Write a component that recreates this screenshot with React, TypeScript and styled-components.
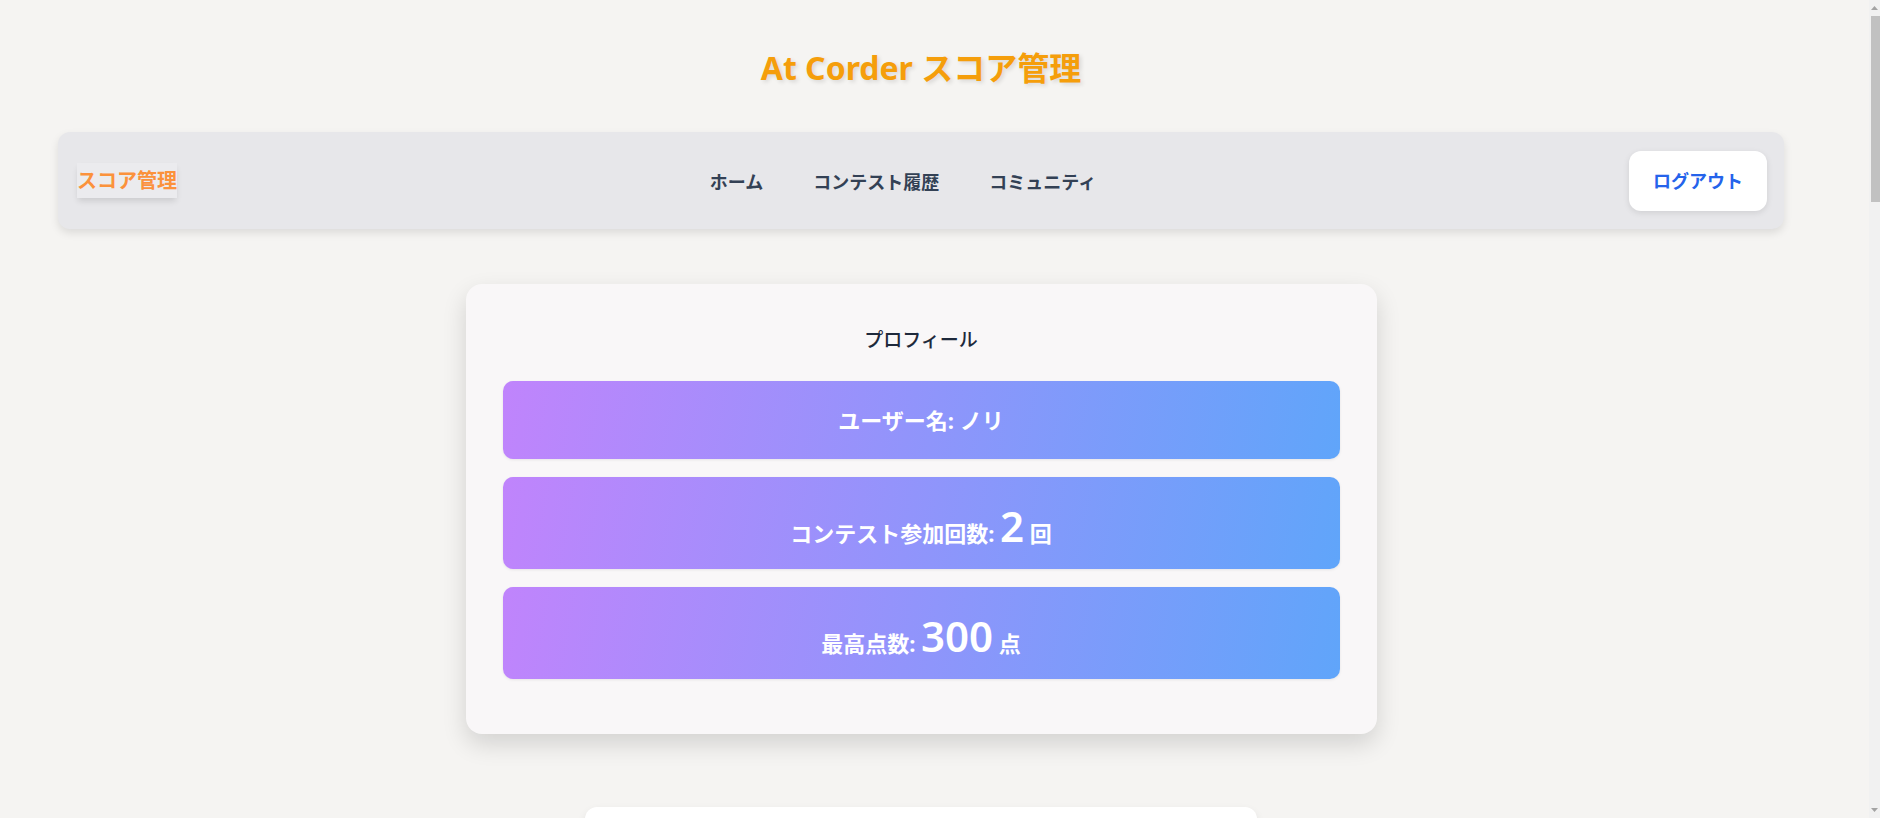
import React from "react";
import styled, { createGlobalStyle } from "styled-components";

const GlobalStyle = createGlobalStyle`
  html, body {
    margin: 0;
    padding: 0;
    background: #f5f4f2;
    font-family: "Noto Sans", "Noto Sans CJK JP", sans-serif;
  }
`;

const Page = styled.div`
  width: 1842px;
  box-sizing: border-box;
  padding: 44px 58px 51px;
`;

const Title = styled.h1`
  margin: 0;
  text-align: center;
  font-size: 32px;
  line-height: 48px;
  font-weight: 700;
  color: #f59e0b;
  text-shadow: 2px 2px 4px rgba(0, 0, 0, 0.12);
`;

const NavBar = styled.nav`
  margin-top: 40px;
  height: 97px;
  box-sizing: border-box;
  padding: 0 17px 0 19px;
  display: flex;
  align-items: center;
  justify-content: space-between;
  background: #e7e7ea;
  border-radius: 12px;
  box-shadow: 0 4px 8px rgba(0, 0, 0, 0.1);
`;

const Logo = styled.span`
  font-size: 20px;
  line-height: 35px;
  font-weight: 700;
  color: #fb923c;
  background: #ebebee;
  box-shadow: 0 4px 6px -1px rgba(0, 0, 0, 0.12);
`;

const NavLinks = styled.div`
  display: flex;
  gap: 50px;
`;

const NavLink = styled.a`
  font-size: 18px;
  font-weight: 600;
  color: #334155;
  text-decoration: none;
  cursor: pointer;
`;

const LogoutButton = styled.button`
  font-family: inherit;
  border: none;
  background: #ffffff;
  color: #2563eb;
  font-size: 18px;
  font-weight: 600;
  line-height: 24px;
  padding: 18px 24px;
  border-radius: 12px;
  box-shadow: 0 2px 6px rgba(0, 0, 0, 0.1);
  cursor: pointer;
`;

const ProfileCard = styled.section`
  width: 911px;
  box-sizing: border-box;
  margin: 55px auto 0;
  padding: 37px;
  background: #f9f7f8;
  border-radius: 16px;
  box-shadow: 0 10px 25px rgba(0, 0, 0, 0.14);
`;

const CardTitle = styled.h2`
  margin: 0 0 22px;
  text-align: center;
  font-size: 19px;
  line-height: 38px;
  font-weight: 500;
  color: #1e293b;
`;

const StatRow = styled.div<{ $tall?: boolean }>`
  height: ${(p) => (p.$tall ? 92 : 78)}px;
  margin-bottom: 18px;
  display: flex;
  align-items: center;
  justify-content: center;
  border-radius: 10px;
  background: linear-gradient(100deg, #c084fc 0%, #60a5fa 100%);
  box-shadow: 0 1px 3px rgba(0, 0, 0, 0.08);
  color: #ffffff;
  font-size: 22px;
  font-weight: 700;
`;

const StatText = styled.span<{ $tall?: boolean }>`
  line-height: 38px;
  padding-top: ${(p) => (p.$tall ? 12 : 0)}px;
`;

const BigNumber = styled.span`
  font-size: 42px;
  font-weight: 600;
  line-height: 38px;
`;

const HistoryCard = styled.section`
  width: 672px;
  height: 2600px;
  margin: 73px auto 0;
  background: #ffffff;
  border-radius: 12px;
  box-shadow: 0 4px 10px rgba(0, 0, 0, 0.08);
`;

const ScrollTrack = styled.div`
  position: fixed;
  top: 0;
  right: 0;
  width: 11px;
  height: 100vh;
  background: #f1f1f1;
  display: flex;
  flex-direction: column;
  align-items: flex-end;
`;

const ScrollArrow = styled.div`
  height: 16px;
  width: 11px;
  display: flex;
  align-items: center;
  justify-content: center;
`;

const ScrollThumb = styled.div`
  width: 9px;
  height: 186px;
  background: #c1c1c1;
`;

const ScrollSpacer = styled.div`
  flex: 1;
`;

function Arrow({ up }: { up?: boolean }) {
  return (
    <ScrollArrow>
      <svg width="7" height="4" viewBox="0 0 7 4">
        <polygon points={up ? "0,4 7,4 3.5,0" : "0,0 7,0 3.5,4"} fill="#a3a3a3" />
      </svg>
    </ScrollArrow>
  );
}

export default function App() {
  return (
    <>
      <GlobalStyle />
      <Page>
        <Title>At Corder スコア管理</Title>
        <NavBar>
          <Logo>スコア管理</Logo>
          <NavLinks>
            <NavLink>ホーム</NavLink>
            <NavLink>コンテスト履歴</NavLink>
            <NavLink>コミュニティ</NavLink>
          </NavLinks>
          <LogoutButton>ログアウト</LogoutButton>
        </NavBar>
        <ProfileCard>
          <CardTitle>プロフィール</CardTitle>
          <StatRow>
            <StatText>ユーザー名: ノリ</StatText>
          </StatRow>
          <StatRow $tall>
            <StatText $tall>
              コンテスト参加回数: <BigNumber>2</BigNumber> 回
            </StatText>
          </StatRow>
          <StatRow $tall>
            <StatText $tall>
              最高点数: <BigNumber>300</BigNumber> 点
            </StatText>
          </StatRow>
        </ProfileCard>
        <HistoryCard />
      </Page>
      <ScrollTrack>
        <Arrow up />
        <ScrollThumb />
        <ScrollSpacer />
        <Arrow />
      </ScrollTrack>
    </>
  );
}
